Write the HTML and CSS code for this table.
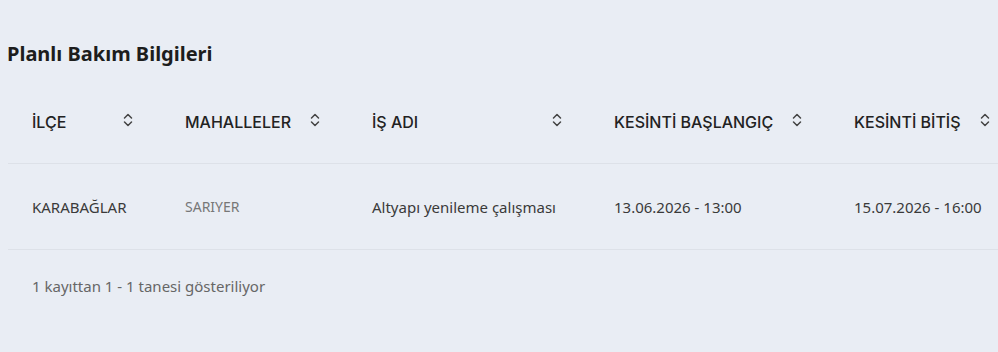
FILE: index.html
```html
<!DOCTYPE html>
<html lang="tr">
<head>
    <meta charset="UTF-8">
    <meta name="viewport" content="width=device-width, initial-scale=1.0">
    <title>Planlı Bakım Bilgileri</title>
    <link rel="stylesheet" href="styles.css">
</head>
<body>
    <div class="section">
        <h2 class="section-title">Planlı Bakım Bilgileri</h2>
        <div class="table-wrap">
            <table class="maint-table">
                <colgroup>
                    <col class="c-ilce">
                    <col class="c-mah">
                    <col class="c-is">
                    <col class="c-bas">
                    <col class="c-bit">
                </colgroup>
                <thead>
                    <tr>
                        <th><div class="th-inner"><span>İLÇE</span><svg class="sort" viewBox="0 0 12 16"><path d="M2.5 6 L6 2.5 L9.5 6 M2.5 10 L6 13.5 L9.5 10"/></svg></div></th>
                        <th><div class="th-inner"><span>MAHALLELER</span><svg class="sort" viewBox="0 0 12 16"><path d="M2.5 6 L6 2.5 L9.5 6 M2.5 10 L6 13.5 L9.5 10"/></svg></div></th>
                        <th><div class="th-inner"><span>İŞ ADI</span><svg class="sort" viewBox="0 0 12 16"><path d="M2.5 6 L6 2.5 L9.5 6 M2.5 10 L6 13.5 L9.5 10"/></svg></div></th>
                        <th><div class="th-inner"><span>KESİNTİ BAŞLANGIÇ</span><svg class="sort" viewBox="0 0 12 16"><path d="M2.5 6 L6 2.5 L9.5 6 M2.5 10 L6 13.5 L9.5 10"/></svg></div></th>
                        <th><div class="th-inner"><span>KESİNTİ BİTİŞ</span><svg class="sort" viewBox="0 0 12 16"><path d="M2.5 6 L6 2.5 L9.5 6 M2.5 10 L6 13.5 L9.5 10"/></svg></div></th>
                    </tr>
                </thead>
                <tbody>
                    <tr>
                        <td>KARABAĞLAR</td>
                        <td class="muted">SARIYER</td>
                        <td>Altyapı yenileme çalışması</td>
                        <td>13.06.2026 - 13:00</td>
                        <td>15.07.2026 - 16:00</td>
                    </tr>
                </tbody>
            </table>
        </div>
        <div class="table-info">1 kayıttan 1 - 1 tanesi gösteriliyor</div>
    </div>
</body>
</html>
```
FILE: styles.css
```css
html, body {
    margin: 0;
    padding: 0;
    overflow: hidden;
}
body {
    font-family: "Noto Sans", "Open Sans", sans-serif;
    background-color: #e9edf4;
    color: #2b2b2b;
    width: 998px;
    height: 352px;
}
.section {
    padding: 40px 0 0 0;
}
.section-title {
    margin: 0 0 0 7px;
    font-size: 20px;
    font-weight: 700;
    color: #1d1d1d;
    line-height: 28px;
}
.table-wrap {
    margin: 21px 0 0 8px;
    width: 1010px;
}
.maint-table {
    border-collapse: collapse;
    table-layout: fixed;
    width: 1010px;
}
.c-ilce { width: 153px; }
.c-mah { width: 187px; }
.c-is { width: 242px; }
.c-bas { width: 240px; }
.c-bit { width: 188px; }
.maint-table th {
    height: 74px;
    padding: 0 27px 0 24px;
    text-align: left;
    font-family: Inter, "Noto Sans", sans-serif;
    font-size: 16px;
    font-weight: 500;
    color: #222;
    border-bottom: 1px solid #dde1e8;
}
.th-inner {
    display: flex;
    justify-content: space-between;
    align-items: center;
    padding-bottom: 8px;
}
.sort {
    width: 12px;
    height: 16px;
    fill: none;
    stroke: #444;
    stroke-width: 1.5;
    stroke-linecap: round;
    stroke-linejoin: round;
    margin-top: -4px;
}
.maint-table td {
    height: 85px;
    padding: 0 24px;
    font-size: 15px;
    color: #3a3a3a;
    border-bottom: 1px solid #dde1e8;
}
.maint-table td.muted {
    font-size: 14px;
    color: #777;
}
.table-info {
    margin: 26px 0 0 32px;
    font-size: 15px;
    color: #666;
}
```
